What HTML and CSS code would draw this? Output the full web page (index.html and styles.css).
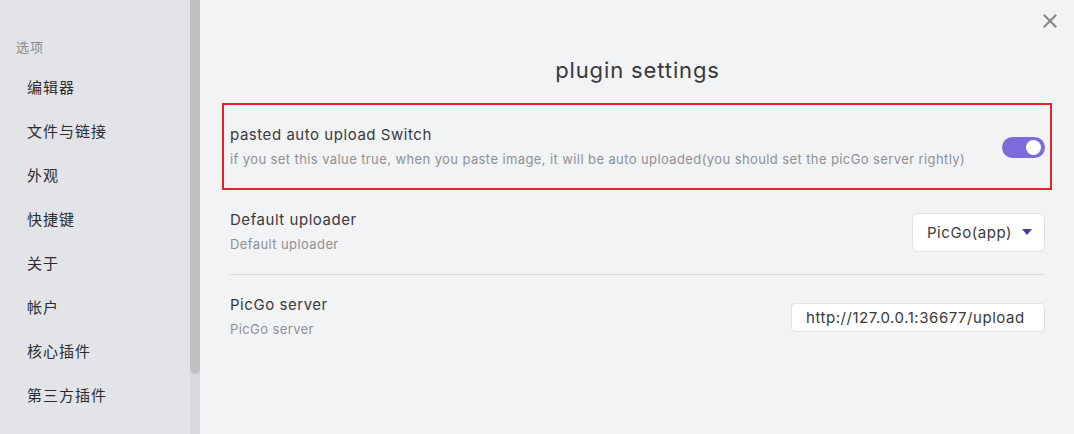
FILE: index.html
```html
<!DOCTYPE html>
<html lang="zh">
<head>
<meta charset="utf-8">
<title>plugin settings</title>
<link rel="stylesheet" href="styles.css">
</head>
<body>
<div class="app">
  <aside class="sidebar">
    <div class="nav">
      <div class="nav-header">选项</div>
      <div class="nav-item">编辑器</div>
      <div class="nav-item">文件与链接</div>
      <div class="nav-item">外观</div>
      <div class="nav-item">快捷键</div>
      <div class="nav-item">关于</div>
      <div class="nav-item">帐户</div>
      <div class="nav-item">核心插件</div>
      <div class="nav-item">第三方插件</div>
    </div>
    <div class="scrollbar"><div class="thumb"></div></div>
  </aside>
  <main class="content">
    <button class="close" aria-label="close">
      <svg width="14" height="14" viewBox="0 0 14 14"><path d="M1.5 1.5 L12.5 12.5 M12.5 1.5 L1.5 12.5" stroke="#858585" stroke-width="2" stroke-linecap="square"/></svg>
    </button>
    <h2 class="title">plugin settings</h2>
    <div class="setting-item highlighted">
      <div class="info">
        <div class="name">pasted auto upload Switch</div>
        <div class="desc">if you set this value true, when you paste image, it will be auto uploaded(you should set the picGo server rightly)</div>
      </div>
      <div class="toggle"><div class="knob"></div></div>
    </div>
    <div class="setting-item">
      <div class="info">
        <div class="name">Default uploader</div>
        <div class="desc">Default uploader</div>
      </div>
      <div class="dropdown">
        <span>PicGo(app)</span>
        <svg width="10" height="6" viewBox="0 0 10 6"><path d="M0 0 H10 L5 6 Z" fill="#4a3a9e"/></svg>
      </div>
    </div>
    <div class="setting-item">
      <div class="info">
        <div class="name">PicGo server</div>
        <div class="desc">PicGo server</div>
      </div>
      <div class="text-input">http://127.0.0.1:36677/upload</div>
    </div>
  </main>
</div>
</body>
</html>
```

FILE: styles.css
```css
* { box-sizing: border-box; }
html, body {
  margin: 0;
  padding: 0;
  width: 1074px;
  height: 434px;
  overflow: hidden;
  font-family: Inter, "Noto Sans CJK SC", sans-serif;
}
.app {
  display: flex;
  height: 434px;
}
.sidebar {
  width: 200px;
  flex: none;
  display: flex;
  background: #e3e4e8;
}
.nav {
  flex: 1;
  padding-top: 37px;
}
.nav-header {
  font-family: "Noto Sans CJK SC", sans-serif;
  font-size: 13px;
  line-height: 20px;
  letter-spacing: 1px;
  color: #8a8a8d;
  padding-left: 16px;
  margin-bottom: 8px;
}
.nav-item {
  font-family: "Noto Sans CJK SC", sans-serif;
  font-size: 15px;
  line-height: 44px;
  height: 44px;
  letter-spacing: 1px;
  color: #2c2c2e;
  padding-left: 27px;
}
.scrollbar {
  width: 10px;
  background: #d9dadd;
}
.thumb {
  height: 374px;
  background: #c1c1c3;
  border-radius: 0 0 5px 5px;
}
.content {
  flex: 1;
  position: relative;
  background: #f2f3f5;
  padding: 55px 29px 0 30px;
  letter-spacing: 0.034em;
}
.close {
  position: absolute;
  top: 14px;
  right: 17px;
  width: 14px;
  height: 14px;
  padding: 0;
  border: none;
  background: none;
  display: flex;
}
.title {
  margin: 0 0 19px;
  text-align: center;
  font-size: 22px;
  line-height: 30px;
  font-weight: 400;
  letter-spacing: 0.04em;
  color: #38383b;
}
.setting-item {
  display: flex;
  align-items: center;
  border-top: 1px solid #dcdcdf;
  padding: 20px 0;
  height: 85px;
  position: relative;
}
.setting-item:nth-of-type(2) { border-top-color: transparent; }
.highlighted {
  outline: 2px solid #e8202a;
  outline-offset: -1px;
  margin: 0 -6px 0 -7px;
  padding-left: 7px;
  padding-right: 6px;
}
.info {
  flex: 1;
  margin-bottom: 2px;
}
.name {
  font-size: 15px;
  line-height: 20px;
  color: #3a3a3d;
}
.desc {
  margin-top: 5px;
  font-size: 13px;
  line-height: 18px;
  letter-spacing: 0.4px;
  color: #909094;
}
.toggle {
  width: 43px;
  height: 21px;
  border-radius: 11px;
  background: #7b6cd9;
  display: flex;
  align-items: center;
  justify-content: flex-end;
  padding-right: 4px;
}
.knob {
  width: 15px;
  height: 15px;
  border-radius: 50%;
  background: #fff;
}
.dropdown {
  width: 133px;
  height: 39px;
  background: #fff;
  border: 1px solid #e2e2e5;
  border-radius: 6px;
  display: flex;
  align-items: center;
  justify-content: space-between;
  padding: 0 12px 0 14px;
  font-size: 15px;
  color: #3a3a3d;
}
.text-input {
  width: 254px;
  height: 29px;
  background: #fff;
  border: 1px solid #e2e2e5;
  border-radius: 4px;
  display: flex;
  align-items: center;
  padding: 0 14px;
  font-size: 15px;
  color: #3a3a3d;
  white-space: nowrap;
}
```
